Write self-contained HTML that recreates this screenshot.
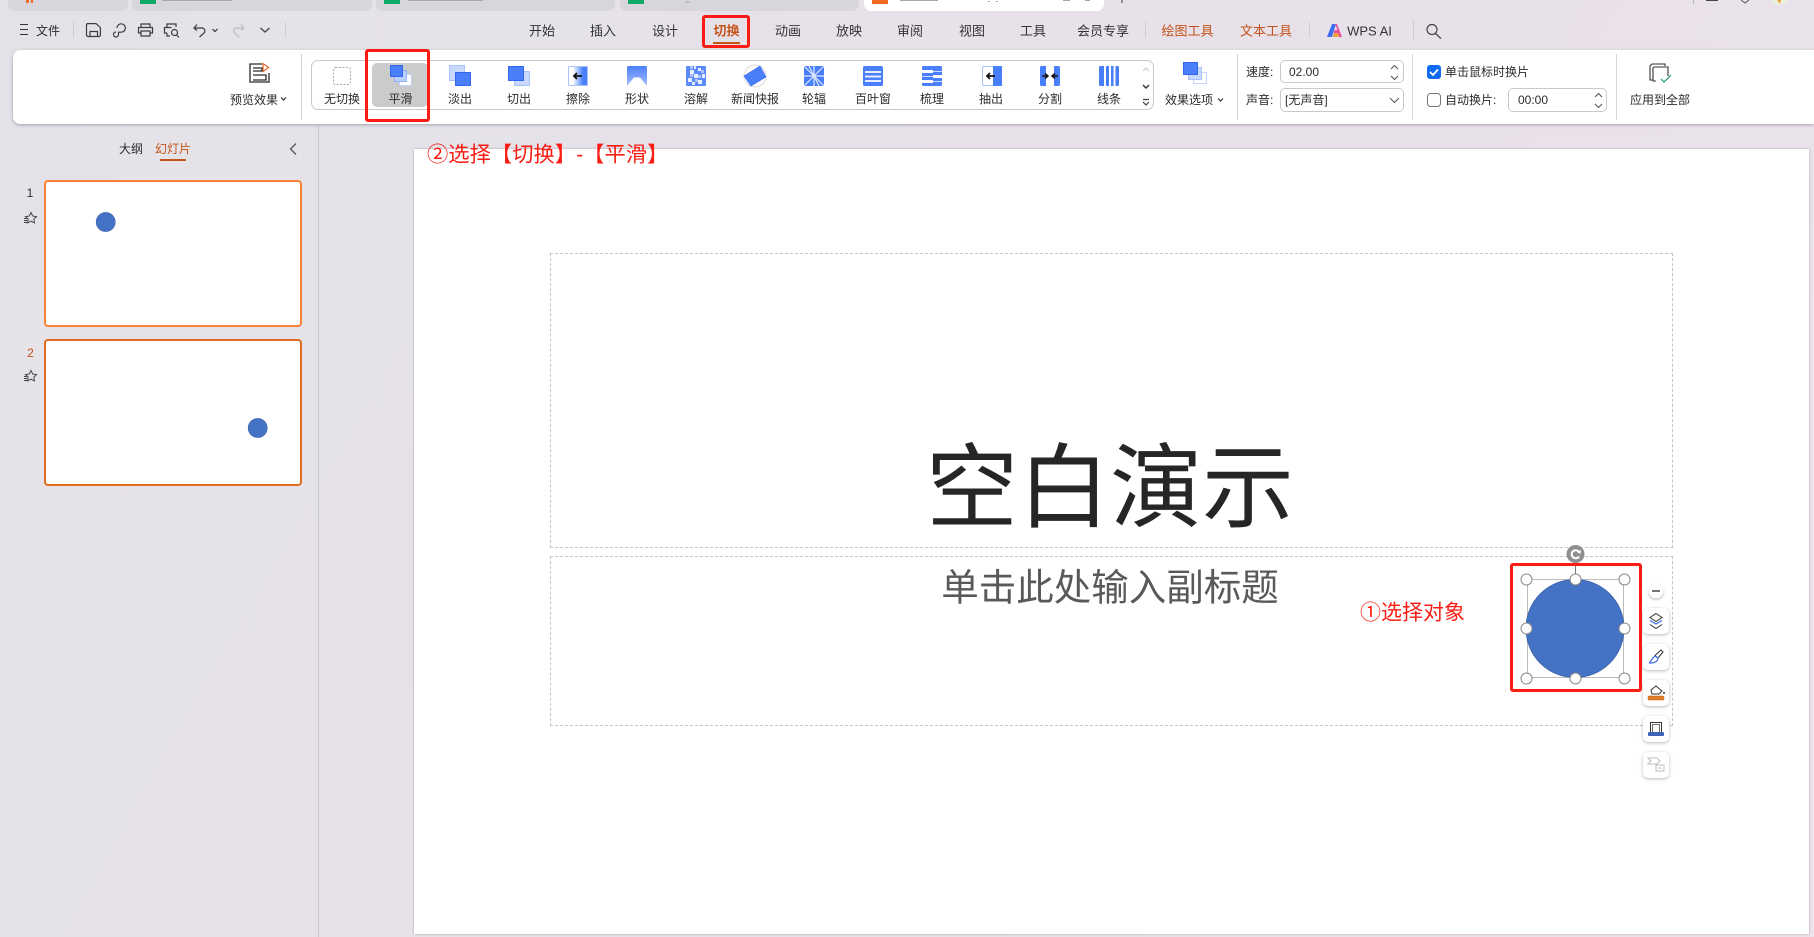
<!DOCTYPE html>
<html><head><meta charset="utf-8"><style>
*{box-sizing:border-box}
html,body{margin:0;padding:0;width:1814px;height:937px;overflow:hidden}
body{position:relative;background:linear-gradient(120deg,#e4e2e8 0%,#e8e1ea 50%,#ece2ea 100%);font-family:"Liberation Sans","Noto Sans CJK SC",sans-serif;color:#2a2a2a}
.a{position:absolute}
.t{position:absolute;transform:translate(-50%,-50%);white-space:nowrap;font-size:12px;line-height:1;color:#2c2c2c}
.l{position:absolute;transform:translateY(-50%);white-space:nowrap;font-size:12px;line-height:1;color:#2c2c2c}
.tab{position:absolute;top:-10px;height:21px;background:#d9d5dc;border-radius:7px}
.n{font-size:13px;top:31px;color:#333}
.o{color:#c4541a}
.sep{position:absolute;width:1px;background:#cfccd2}
.rsep{position:absolute;width:1px;top:54px;height:66px;background:#d6d6d6}
.inp{position:absolute;background:#fff;border:1px solid #c9c9c9;border-radius:5px}
.red{position:absolute;border:3px solid #fb1d14;border-radius:3px}
.btn{position:absolute;left:1643px;width:26px;height:26px;background:#fff;border-radius:5px;box-shadow:0 1px 3px rgba(0,0,0,.28)}
.ph{position:absolute;border:1px dashed #c4c4c4}
</style></head><body>
<div class="tab" style="left:8px;width:120px"></div>
<div class="tab" style="left:132px;width:240px"></div>
<div class="tab" style="left:376px;width:239px"></div>
<div class="tab" style="left:620px;width:239px"></div>
<div class="tab" style="left:864px;width:240px;background:#fff"></div>

<span class="t" style="left:48px;top:31px;font-size:12px">文件</span>
<span class="t n" style="left:542px">开始</span>
<span class="t n" style="left:603px">插入</span>
<span class="t n" style="left:665px">设计</span>
<span class="t n" style="left:726.5px;color:#c4541a;font-weight:700">切换</span>
<span class="t n" style="left:788px">动画</span>
<span class="t n" style="left:849px">放映</span>
<span class="t n" style="left:910px">审阅</span>
<span class="t n" style="left:972px">视图</span>
<span class="t n" style="left:1033px">工具</span>
<span class="t n" style="left:1103px">会员专享</span>
<span class="t n o" style="left:1187.5px;color:#c4541a">绘图工具</span>
<span class="t n o" style="left:1266px;color:#c4541a">文本工具</span>
<span class="t n" style="left:1369.500px;font-size:13px">WPS AI</span>
<div class="a" style="left:713px;top:42px;width:27px;height:2px;background:#c4541a"></div>
<div class="sep" style="left:73px;top:22px;height:16px"></div>
<div class="sep" style="left:285px;top:22px;height:16px"></div>
<div class="sep" style="left:1145px;top:22px;height:16px"></div>
<div class="sep" style="left:1309px;top:22px;height:16px"></div>
<div class="sep" style="left:1413px;top:20px;height:20px"></div>
<div class="sep" style="left:1693px;top:0;height:4px;background:#b5b2b8"></div>

<!-- ribbon -->
<div class="a" style="left:13px;top:50px;width:1801px;height:74px;background:#fff;border-radius:7px 0 0 7px;box-shadow:0 1px 3px rgba(0,0,0,.28)"></div>
<div class="rsep" style="left:301px"></div>
<div class="rsep" style="left:1237px"></div>
<div class="rsep" style="left:1412px"></div>
<div class="rsep" style="left:1616px"></div>
<div class="a" style="left:311px;top:60px;width:843px;height:50px;border:1px solid #c9c9c9;border-radius:7px"></div>
<div class="a" style="left:372px;top:63px;width:56px;height:44px;background:#cbcbcb;border-radius:5px"></div>

<span class="t" style="left:254px;top:100px">预览效果</span>
<span class="t" style="left:342px;top:99px">无切换</span>
<span class="t" style="left:400.500px;top:99px">平滑</span>
<span class="t" style="left:460px;top:99px">淡出</span>
<span class="t" style="left:519px;top:99px">切出</span>
<span class="t" style="left:578px;top:99px">擦除</span>
<span class="t" style="left:637px;top:99px">形状</span>
<span class="t" style="left:696px;top:99px">溶解</span>
<span class="t" style="left:755px;top:99px">新闻快报</span>
<span class="t" style="left:814px;top:99px">轮辐</span>
<span class="t" style="left:873px;top:99px">百叶窗</span>
<span class="t" style="left:932px;top:99px">梳理</span>
<span class="t" style="left:991px;top:99px">抽出</span>
<span class="t" style="left:1050px;top:99px">分割</span>
<span class="t" style="left:1109px;top:99px">线条</span>
<span class="t" style="left:1189px;top:100px">效果选项</span>
<span class="l" style="left:1246px;top:72px">速度:</span>
<span class="l" style="left:1246px;top:100px">声音:</span>
<div class="inp" style="left:1280px;top:60px;width:124px;height:23px"></div>
<div class="inp" style="left:1280px;top:88px;width:124px;height:24px"></div>
<span class="l" style="left:1289px;top:72px">02.00</span>
<span class="l" style="left:1285px;top:100px">[无声音]</span>
<span class="l" style="left:1445px;top:72px">单击鼠标时换片</span>
<span class="l" style="left:1445px;top:100px">自动换片:</span>
<div class="inp" style="left:1508px;top:88px;width:99px;height:24px"></div>
<span class="l" style="left:1518px;top:100px">00:00</span>
<span class="t" style="left:1660px;top:100px">应用到全部</span>

<!-- left panel -->
<div class="a" style="left:318px;top:125px;width:1px;height:812px;background:#cac7cd"></div>
<span class="t" style="left:131px;top:149px">大纲</span>
<span class="t" style="left:173px;top:149px;color:#c4541a">幻灯片</span>
<div class="a" style="left:160px;top:159px;width:26px;height:2px;background:#c4541a"></div>
<div class="a" style="left:44px;top:180px;width:258px;height:147px;background:#fff;border:2px solid #fb8136;border-radius:4px"></div>
<div class="a" style="left:44px;top:339px;width:258px;height:147px;background:#fff;border:2px solid #e06c1f;border-radius:4px"></div>
<span class="t" style="left:30px;top:193px">1</span>
<span class="t" style="left:30.500px;top:353px;color:#c4541a">2</span>

<!-- slide -->
<div class="a" style="left:414px;top:149px;width:1395px;height:785px;background:#fff;box-shadow:0 0 2px rgba(0,0,0,.3)"></div>
<div class="ph" style="left:550px;top:253px;width:1123px;height:295px"></div>
<div class="ph" style="left:550px;top:556px;width:1123px;height:170px"></div>
<span class="t" style="left:1110px;top:489px;font-size:92px;color:#262626">空白演示</span>
<span class="t" style="left:1110px;top:588px;font-size:37.500px;color:#595959">单击此处输入副标题</span>

<span class="l" style="left:427px;top:155px;font-size:21.300px;color:#fb1d14">②选择【切换】-【平滑】</span>
<span class="l" style="left:1360px;top:613px;font-size:21px;color:#fb1d14">①选择对象</span>

<div class="btn" style="top:608px"></div>
<div class="btn" style="top:644px"></div>
<div class="btn" style="top:680px"></div>
<div class="btn" style="top:716px"></div>
<div class="btn" style="top:752px"></div>

<svg class="a" style="left:0;top:0" width="1814" height="937" viewBox="0 0 1814 937" fill="none">
<defs>
<linearGradient id="lr" x1="0" x2="1" y1="0" y2="0"><stop offset=".25" stop-color="#fff"/><stop offset=".75" stop-color="#4a7ffb"/></linearGradient>
<linearGradient id="tb" x1="0" x2="0" y1="0" y2="1"><stop offset="0" stop-color="#4a7ffb"/><stop offset=".55" stop-color="#7da2fb"/><stop offset="1" stop-color="#a9c2fb"/></linearGradient>
</defs>
<!-- tab fragments -->
<rect x="26" y="0" width="3" height="3" fill="#f26a21"/><rect x="31" y="0" width="2" height="3" fill="#f26a21"/>
<rect x="140" y="0" width="16" height="4" fill="#0fa968"/>
<rect x="384" y="0" width="16" height="4" fill="#0fa968"/>
<rect x="628" y="0" width="16" height="4" fill="#0fa968"/>
<rect x="872" y="0" width="16" height="4" fill="#f26a21"/>
<path d="M162 .5h70M408 .5h75M685 2h5M900 .5h38M988 1.500h2M996 1.500h2M1063 .5h7M1085 .5h5" stroke="#a9a7ab" stroke-width="1"/>
<path d="M1122 0v3" stroke="#777" stroke-width="1.500"/>
<path d="M1706 .5h12v0" stroke="#444"/>
<path d="M1741 0l4 3 4-3" stroke="#555"/>
<circle cx="1779" cy="-4" r="9" fill="#e9f2df"/><path d="M1777 0l3 4 1-4z" fill="#e9a33c"/>

<!-- QAT -->
<path d="M20 24.500h8M20 29.500h8M20 34.500h8" stroke="#333"/>
<g stroke="#3c3c3c" stroke-width="1.200">
<path d="M88 23.600h8l4.400 4V35a1.500 1.500 0 0 1-1.500 1.500H88A1.500 1.500 0 0 1 86.500 35V25a1.500 1.500 0 0 1 1.500-1.500zM90 36.500v-5h7.500v5"/>
<path d="M117 28a4.200 4.200 0 1 1 4.200 4.200H118.500v2.300a2.500 2.500 0 1 1-2.500-2.500"/>
<path d="M141 28v-4h9v4M141 33h-2.500v-5.500h14V33H150M141 31h9v5h-9z"/>
<path d="M167 28v-4h9v3M167 33h-2.500v-5.500h7M170 36h-3v-3"/><circle cx="174.500" cy="32.500" r="3"/><path d="M176.500 35l2.500 2.500"/>
<path d="M194.500 28h7a3 3 0 0 1 2 5.500l-4 3.500M197 24.500l-3 3.500 3 2.500"/>
</g>
<path d="M212.500 29l2.500 2.500L217.500 29" stroke="#333" stroke-width="1.200"/>
<path d="M244 28h-7a3 3 0 0 0-2 5.500l4 3.500M241 24.500l3 3.500-3 2.500" stroke="#bdbbc0" stroke-width="1.200"/>
<path d="M260.500 28l4.500 4 4.500-4" stroke="#444" stroke-width="1.300"/>
<!-- WPS AI mark -->
<path d="M1327 37l5-13h4l-4 13z" fill="#3d6ff0"/><path d="M1335 24l2.500 6h-3l-1.500 7h9l-5-13z" fill="#ea4f9c"/><path d="M1334 33h4l1.500 4h-6.500z" fill="#f6a03e"/>
<circle cx="1432" cy="29.500" r="5" stroke="#444" stroke-width="1.200"/><path d="M1435.500 33.500l5.500 5" stroke="#444" stroke-width="1.300"/>

<!-- preview icon -->
<g stroke="#2a2a2a" stroke-width="1.300"><path d="M262 64h-12v18h19v-9"/><path d="M253 71h9v-3h-9M253 75h13v5h-13"/></g>
<path d="M263 63.500v8l5.500-4z" stroke="#e0602a" stroke-width="1.200"/>
<path d="M281 97.500l2.500 2.500 2.500-2.500" stroke="#333" stroke-width="1.200"/>

<!-- gallery icons -->
<rect x="333.500" y="67.500" width="17" height="17" rx="2" stroke="#a8a8a8" stroke-dasharray="2 1.500"/>
<g stroke-width="1">
<rect x="399.500" y="74.500" width="12" height="11" fill="#fff" stroke="#c4d5fc"/><rect x="394.500" y="70.500" width="12" height="11" fill="#bcd0fd" stroke="#8fb0fb"/><rect x="390.500" y="65.500" width="12" height="11" fill="#4a7ffb" stroke="#3467ee"/>
<rect x="449.500" y="65.500" width="15" height="15" fill="#c9d9fd" stroke="#a9c2fb"/><rect x="455.500" y="72.500" width="15" height="13" fill="#4a7ffb" stroke="#3467ee"/>
<rect x="514.500" y="71.500" width="15" height="14" fill="#c9d9fd" stroke="#a9c2fb"/><rect x="508.500" y="66.500" width="15" height="14" fill="#4a7ffb" stroke="#3467ee"/>
</g>
<rect x="568" y="66" width="20" height="20" rx="1.500" fill="url(#lr)"/><rect x="568.500" y="66.500" width="19" height="19" rx="1" stroke="#a9c2fb"/>
<path d="M574 76h8M577 73l-3 3 3 3" stroke="#111" stroke-width="1.800"/>
<rect x="627" y="66" width="20" height="20" rx="1.500" fill="url(#tb)"/><path d="M627 86l7-8.500h6l7 8.500z" fill="#fff"/>
<rect x="686" y="66" width="20" height="20" rx="1" fill="#5a8afb"/>
<path d="M690 70h4v4h-4zM698 68h3v3h-3zM694 74h4v4h-4zM688 78h4v4h-4zM702 74h3v4h-3zM698 80h4v4h-4zM692 82h3v3h-3zM694 66h2v3h-2z" fill="#e8eefe"/>
<path d="M690 66h3v3h-3zM701 70h3v3h-3zM698 75h3v3h-3zM690 74h3v3h-3zM695 79h3v3h-3z" fill="#adc5fc"/>
<circle cx="755" cy="76" r="11" stroke="#dcdcdc"/>
<path d="M744 76l16-10 6 11-15 9z" fill="#4a7ffb" stroke="#3467ee" stroke-width=".6"/>
<rect x="804" y="66" width="20" height="20" fill="#4a7ffb"/>
<path d="M814 76L804 66M814 76L824 66M814 76L804 86M814 76L824 86M814 76V66M814 76V86M814 76H804M814 76H824M814 76L809 66M814 76L819 86" stroke="#dfe8fe" stroke-width="1.200"/>
<rect x="863" y="66" width="20" height="20" rx="1.500" fill="#4a7ffb"/><path d="M865 72h16M865 76.500h16M865 81h16" stroke="#e6edfe" stroke-width="2"/>
<rect x="922" y="66" width="20" height="20" rx="1.500" fill="#4a7ffb"/><path d="M922 71.500h11M933 76.500h9M922 81.500h11" stroke="#fff" stroke-width="3"/><path d="M933 71.500h9M922 76.500h11M933 81.500h9" stroke="#cfdcfd" stroke-width="1"/>
<rect x="982.500" y="66.500" width="19" height="19" rx="1" fill="#fff" stroke="#a9c2fb"/><rect x="993" y="66" width="9" height="20" fill="#4a7ffb"/>
<path d="M987 76h8M990 73l-3 3 3 3" stroke="#111" stroke-width="1.800"/>
<rect x="1040" y="66" width="20" height="20" rx="1.500" fill="#4a7ffb"/><rect x="1046" y="66" width="8" height="20" fill="#fff"/>
<path d="M1042 76h5M1045 73.500l3 2.500-3 2.500M1058 76h-5M1055 73.500l-3 2.500 3 2.500" stroke="#111" stroke-width="1.500"/>
<rect x="1099" y="66" width="20" height="20" rx="1.500" fill="#4a7ffb"/><path d="M1105 66v20M1110 66v20M1114.500 66v20" stroke="#fff" stroke-width="2"/>
<path d="M1143 71l3-3 3 3" stroke="#c9c9c9" stroke-width="1.200"/>
<path d="M1143 85l3 3 3-3" stroke="#333" stroke-width="1.400"/>
<path d="M1143 99.500h6M1143 102l3 3 3-3" stroke="#444" stroke-width="1.200"/>
<rect x="1193.500" y="72.500" width="13" height="11" fill="#fff" stroke="#c4d5fc"/><rect x="1188.500" y="67.500" width="13" height="12" fill="#c9d9fd" stroke="#a9c2fb"/><rect x="1183.500" y="62.500" width="14" height="12" fill="#4a7ffb" stroke="#3467ee"/>
<path d="M1218 98.500l2.500 2.500 2.500-2.500" stroke="#333" stroke-width="1.200"/>

<!-- spinners -->
<path d="M1391 69l3.500-3.500 3.500 3.500M1391 76l3.500 3.500 3.500-3.500" stroke="#555"/>
<path d="M1390 98l4.500 4.500 4.500-4.500" stroke="#555"/>
<path d="M1595 97l3.500-3.500 3.500 3.500M1595 104l3.500 3.500 3.500-3.500" stroke="#555"/>
<rect x="1427" y="65" width="14" height="14" rx="3" fill="#0f6cf2"/><path d="M1430 72l3 3 5-5.500" stroke="#fff" stroke-width="1.800"/>
<rect x="1427.500" y="93.500" width="13" height="13" rx="3" fill="#fff" stroke="#777"/>
<!-- apply icon -->
<path d="M1653 80h-3v-14l2-2h13v2M1656 81h-3V68l1-1h14v9" stroke="#333" stroke-width="1.100"/>
<path d="M1661 79l3 3 7-7" stroke="#1a9470" stroke-width="1.200"/>

<!-- panel -->
<path d="M296 143.500l-5.500 5.500 5.500 5.500" stroke="#555" stroke-width="1.300"/>
<circle cx="105.700" cy="222" r="9.500" fill="#4472c4" stroke="#3e68b4" stroke-width=".7"/>
<circle cx="257.700" cy="428" r="9.500" fill="#4472c4" stroke="#3e68b4" stroke-width=".7"/>
<g id="s" stroke="#444"><path d="M31 212.500l1.800 3.600 3.700.5-2.700 2.600.7 3.700-3.500-1.700-3.500 1.700.7-3.700-2.700-2.600 3.700-.5z"/><path d="M24 218.500h3M24 220.500h3M24 222.500h3"/></g>
<use href="#s" y="158"/>

<!-- selection -->
<rect x="1527.500" y="579.500" width="96" height="98" stroke="#bcbcbc"/>
<circle cx="1575" cy="628.500" r="49" fill="#4472c4" stroke="#3c65ad"/>
<path d="M1575.500 562v17" stroke="#777"/>
<circle cx="1575.500" cy="554" r="9" fill="#8f8f8f"/>
<path d="M1579.500 553a4 4 0 1 0-.5 3.500" stroke="#fff" stroke-width="2"/><path d="M1577 552l3.500 2 .5-4z" fill="#fff"/>
<g fill="#fff" stroke="#8a8a8a" stroke-width="1">
<circle cx="1526.500" cy="579.500" r="5.500"/><circle cx="1575.500" cy="579.500" r="5.500"/><circle cx="1624.500" cy="579.500" r="5.500"/>
<circle cx="1526.500" cy="628.500" r="5.500"/><circle cx="1624.500" cy="628.500" r="5.500"/>
<circle cx="1526.500" cy="678.500" r="5.500"/><circle cx="1575.500" cy="678.500" r="5.500"/><circle cx="1624.500" cy="678.500" r="5.500"/>
</g>
<!-- side -->
<circle cx="1656" cy="591" r="7.500" fill="#fff" style="filter:drop-shadow(0 1px 1px rgba(0,0,0,.3))"/><path d="M1652 591h8" stroke="#666" stroke-width="1.800"/>
<path d="M1656 613.500l6 4-6 4-6-4z" stroke="#333"/><path d="M1650 620.500l6 3.500 6-3.500" stroke="#3f6fe8" stroke-width="1.200"/><path d="M1650 624.500l6 4 6-4" stroke="#333"/>
<path d="M1661 650l2 2-5 6-3-2.500z" stroke="#333"/><path d="M1655 656l3 2c0 3-3 5-7 5h-2c2-1 2-4 6-7z" stroke="#3f6fe8" stroke-width="1.200"/>
<path d="M1651 690l5-4 6 5-3 3h-7z" stroke="#333"/><circle cx="1664" cy="693" r="1" fill="#333"/><rect x="1648" y="696" width="16" height="4" rx="1" fill="#e27b27" stroke="#b85f15" stroke-width=".5"/>
<rect x="1650.500" y="722.500" width="11" height="11" stroke="#333"/><rect x="1652.500" y="724.500" width="7" height="9" stroke="#333" stroke-width=".7"/><rect x="1648" y="732" width="16" height="4" rx="1" fill="#3c64b8"/>
<path d="M1648 758h9l3 3-3 3h-9l3-3zM1656 765v6h8v-6z" stroke="#bdbdbd"/><path d="M1658 768h4" stroke="#bdbdbd"/>
</svg>

<div class="red" style="left:365px;top:49px;width:65px;height:73px"></div>
<div class="red" style="left:702px;top:15px;width:48px;height:33px"></div>
<div class="red" style="left:1510px;top:563px;width:132px;height:129px"></div>
</body></html>
